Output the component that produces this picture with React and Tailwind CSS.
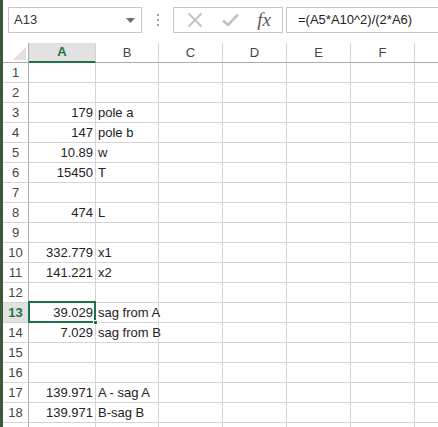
import React from 'react';

const cols = [
  { key: 'A', w: 'w-[67px]' },
  { key: 'B', w: 'w-[63px]' },
  { key: 'C', w: 'w-[64px]' },
  { key: 'D', w: 'w-[64px]' },
  { key: 'E', w: 'w-[64px]' },
  { key: 'F', w: 'w-[64px]' },
  { key: 'G', w: 'w-[64px]' },
];

const data = {
  3: ['179', 'pole a'],
  4: ['147', 'pole b'],
  5: ['10.89', 'w'],
  6: ['15450', 'T'],
  8: ['474', 'L'],
  10: ['332.779', 'x1'],
  11: ['141.221', 'x2'],
  13: ['39.029', 'sag from A'],
  14: ['7.029', 'sag from B'],
  17: ['139.971', 'A - sag A'],
  18: ['139.971', 'B-sag B'],
};

const rows = Array.from({ length: 19 }, (_, i) => i + 1);

const App = () => {
  return (
    <div
      className="w-[438px] h-[427px] overflow-hidden bg-white flex text-[13px] text-[#222]"
      style={{ fontFamily: '"Liberation Sans", Arial, sans-serif' }}
    >
      {/* desktop edge */}
      <div className="w-[3px] shrink-0 bg-[#3a5a3a]" />

      <div className="flex-1 flex flex-col min-w-0">
        {/* Formula bar */}
        <div className="h-[43px] shrink-0 flex items-start pt-[7px]">
          <div className="ml-[5px] w-[134px] h-[26px] border border-[#c6c6c6] flex items-center justify-between pl-[5px] pr-[6px]">
            <span className="text-[#333]">A13</span>
            <svg width="9" height="5" viewBox="0 0 9 5">
              <path d="M0 0 L9 0 L4.5 5 Z" fill="#6e6e6e" />
            </svg>
          </div>
          <div className="w-[31px] h-[26px] flex flex-col items-center justify-center gap-[3px]">
            <span className="w-[2px] h-[2px] bg-[#a0a0a0]" />
            <span className="w-[2px] h-[2px] bg-[#a0a0a0]" />
            <span className="w-[2px] h-[2px] bg-[#a0a0a0]" />
          </div>
          <div className="w-[110px] h-[26px] border border-[#c6c6c6] flex items-center">
            <div className="w-[41px] flex justify-center">
              <svg width="16" height="16" viewBox="0 0 16 16">
                <path d="M1.5 1.5 L14.5 14.5 M14.5 1.5 L1.5 14.5" stroke="#c3c3c3" strokeWidth="1.8" />
              </svg>
            </div>
            <div className="w-[31px] flex justify-center">
              <svg width="17" height="14" viewBox="0 0 17 14">
                <path d="M1 7.5 L6 12 L16 1.5" stroke="#c3c3c3" strokeWidth="2.6" fill="none" strokeLinejoin="round" />
              </svg>
            </div>
            <div
              className="flex-1 flex justify-center italic text-[19px] text-[#5a5a5a] leading-none -mt-[2px]"
              style={{ fontFamily: '"Liberation Serif", "Times New Roman", serif' }}
            >
              fx
            </div>
          </div>
          <div className="ml-[3px] flex-1 h-[26px] border border-[#c6c6c6] border-r-0 flex items-center pl-[11px]">
            <span className="text-[#222] whitespace-nowrap">=(A5*A10^2)/(2*A6)</span>
          </div>
        </div>

        {/* Column headers */}
        <div className="flex h-[20px] shrink-0">
          <div className="w-[26px] shrink-0 border-r border-b border-[#ababab] relative bg-white">
            <div className="absolute right-[2px] bottom-[2px] w-0 h-0 border-l-[13px] border-l-transparent border-b-[13px] border-b-[#dfdfdf]" />
          </div>
          {cols.map((c) => (
            <div
              key={c.key}
              className={`${c.w} shrink-0 flex items-center justify-center ${
                c.key === 'A'
                  ? 'bg-[#e1e1e1] border-b-2 border-b-[#217346] border-r border-r-[#d4d4d4] text-[#217346] font-bold'
                  : 'bg-white border-b border-b-[#ababab] border-r border-r-[#d4d4d4] text-[#444]'
              }`}
            >
              {c.key !== 'G' && c.key}
            </div>
          ))}
        </div>

        {/* Rows */}
        {rows.map((r) => {
          const sel = r === 13;
          const d = data[r];
          return (
            <div key={r} className="flex h-[20px] shrink-0">
              <div
                className={`w-[26px] shrink-0 flex items-center justify-center border-b border-b-[#d4d4d4] border-r ${
                  sel
                    ? 'bg-[#e1e1e1] border-r-[#ababab] text-[#217346] font-bold'
                    : 'bg-white border-r-[#ababab] text-[#444]'
                }`}
              >
                {r < 19 && r}
              </div>
              {cols.map((c) => (
                <div
                  key={c.key}
                  className={`${c.w} shrink-0 border-r border-b border-[#d4d4d4] flex items-center whitespace-nowrap relative ${
                    c.key === 'A' ? 'justify-end pr-[2px]' : 'pl-[2px]'
                  }`}
                >
                  {d && c.key === 'A' && d[0]}
                  {d && c.key === 'B' && <span className="relative z-10">{d[1]}</span>}
                  {sel && c.key === 'A' && (
                    <>
                      <div className="absolute -left-[1px] -top-[2px] -right-[1px] -bottom-[1px] border-2 border-[#217346]" />
                      <div className="absolute -right-[3px] -bottom-[3px] w-[5px] h-[5px] bg-[#217346] border border-white z-20" />
                    </>
                  )}
                </div>
              ))}
            </div>
          );
        })}
      </div>
    </div>
  );
};

export default App;
